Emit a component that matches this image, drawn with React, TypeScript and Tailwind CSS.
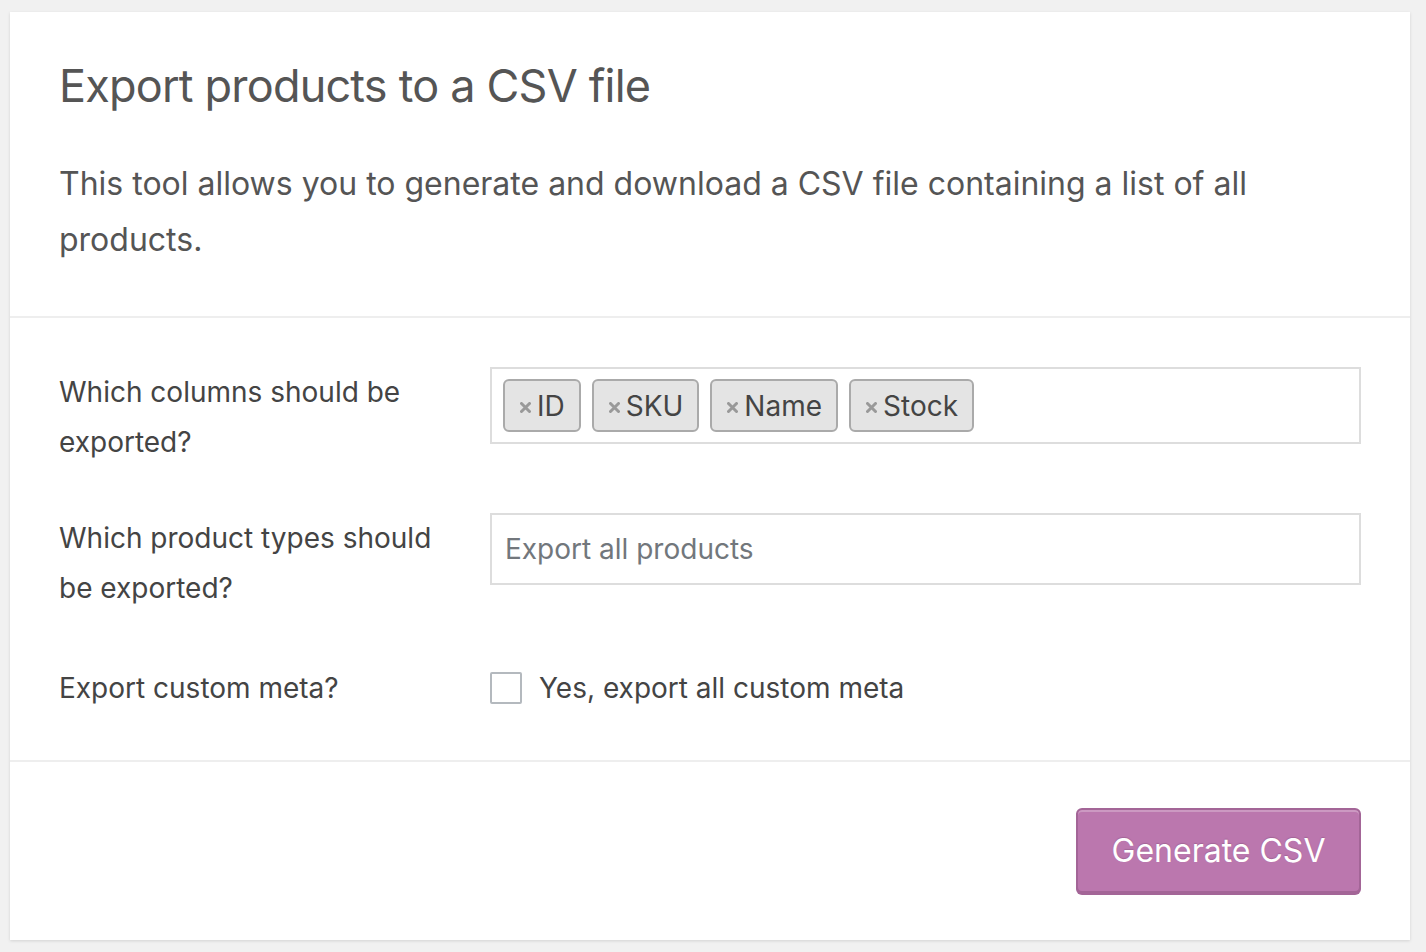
import React from "react";

function Tag({ label }: { label: string }) {
  return (
    <div className="flex items-center h-[53px] pl-[15px] pr-[14px] rounded-[6px] border-2 border-[#aaaaaa] bg-[#e4e4e4] text-[#444] text-[28px] leading-none">
      <svg width="11" height="11" viewBox="0 0 11 11" className="mr-[6px] mt-[3px]">
        <path d="M1.5 1.5 L9.5 9.5 M9.5 1.5 L1.5 9.5" stroke="#999" strokeWidth="3" strokeLinecap="round" />
      </svg>
      <span>{label}</span>
    </div>
  );
}

export default function App() {
  return (
    <div
      className="min-h-[952px] bg-[#f1f1f1] pt-[12px] pl-[10px] pr-[16px] pb-[12px]"
      style={{ fontFamily: "Inter, 'Noto Sans', sans-serif" }}
    >
      <div className="bg-white w-[1400px] shadow-[0_1px_3px_rgba(0,0,0,0.13)]">
        <div className="px-[49px] pt-[46px] pb-[48px] border-b-2 border-[#eeeeee]">
          <h2 className="text-[45px] leading-[56px] text-[#555] font-normal tracking-[-0.8px]">
            Export products to a CSV file
          </h2>
          <p className="mt-[42px] text-[32px] leading-[56px] text-[#555] pr-[60px]">
            This tool allows you to generate and download a CSV file containing a list of all products.
          </p>
        </div>
        <div className="px-[49px] pt-[49px] pb-[47px] border-b-2 border-[#eeeeee] text-[28px] leading-[50px] text-[#444]">
          <div className="flex">
            <div className="w-[431px] pr-[41px]">Which columns should be exported?</div>
            <div className="flex-1 h-[77px] border-2 border-[#dddddd] flex items-center gap-[11px] px-[11px]">
              <Tag label="ID" />
              <Tag label="SKU" />
              <Tag label="Name" />
              <Tag label="Stock" />
            </div>
          </div>
          <div className="flex mt-[46px]">
            <div className="w-[431px] pr-[41px]">Which product types should be exported?</div>
            <div className="flex-1 h-[72px] border-2 border-[#dddddd] flex items-center px-[13px] text-[#72777c]">
              Export all products
            </div>
          </div>
          <div className="flex mt-[50px] items-center">
            <div className="w-[431px]">Export custom meta?</div>
            <div className="flex items-center">
              <div className="w-[32px] h-[32px] border-2 border-[#b4b9be] bg-white rounded-[2px]" />
              <span className="ml-[17px]">Yes, export all custom meta</span>
            </div>
          </div>
        </div>
        <div className="px-[49px] pt-[46px] pb-[47px] flex justify-end">
          <button className="w-[285px] h-[85px] rounded-[6px] bg-[#bb77ae] border-2 border-[#a36597] text-white text-[32px] shadow-[inset_0_2px_0_rgba(255,255,255,0.25),0_2px_0_#a36597] [text-shadow:0_-1px_1px_#a36597]">
            Generate CSV
          </button>
        </div>
      </div>
    </div>
  );
}
